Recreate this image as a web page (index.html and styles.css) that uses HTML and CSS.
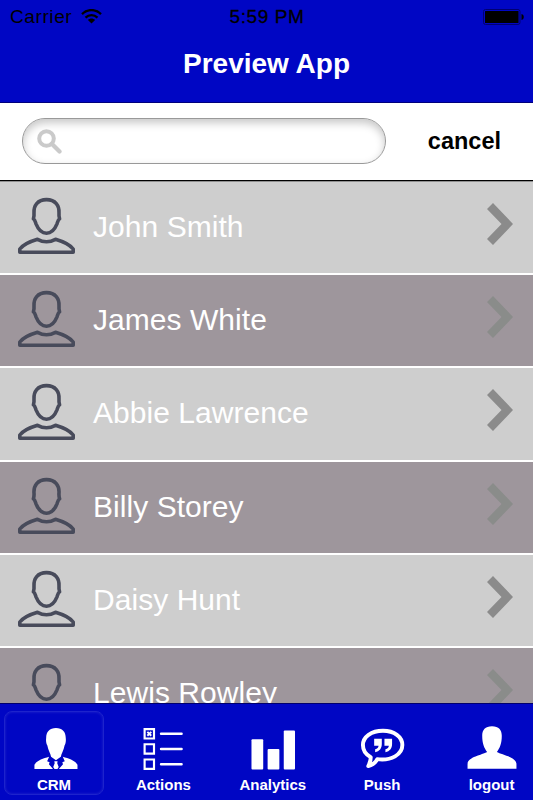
FILE: index.html
```html
<!DOCTYPE html>
<html lang="en">
<head>
<meta charset="UTF-8">
<meta name="viewport" content="width=device-width, initial-scale=1.0">
<title>Preview App</title>
<link rel="stylesheet" href="styles.css">
</head>
<body>

<!-- Shared icons -->
<svg class="sprite" width="0" height="0">
    <symbol id="person" viewBox="0 0 59 58">
        <g fill="none" stroke="#484b5b" stroke-width="3.6" stroke-linejoin="round">
            <path d="M29.5 2.6C20.5 2.6 16.5 8.8 17 16C17.2 18.5 17 20 16.4 21.8C18 22.8 18.2 24.5 19 26.8C21.5 33 25 36.2 29.5 36.2C34 36.2 37.5 33 40 26.8C40.8 24.5 41 22.8 42.6 21.8C42 20 41.8 18.5 42 16C42.5 8.8 38.5 2.6 29.5 2.6Z"/>
            <path d="M20.5 42.3C26 45.3 33 45.3 38.5 42.3C46 44.5 53 48 56.2 52V55.2H2.8V52C6 48 13 44.5 20.5 42.3Z"/>
        </g>
    </symbol>
    <symbol id="chevron" viewBox="0 0 26 42">
        <path d="M0 6L6 0L26 21L6 42L0 36L14.5 21Z" fill="currentColor"/>
    </symbol>
</svg>

<div class="app">
    <header class="header">
        <div class="status-bar">
            <div class="carrier">
                <span>Carrier</span>
                <svg class="wifi" width="21" height="15" viewBox="0 0 21 15">
                    <path d="M1 5.1C6.5-.3 14.5-.3 20 5.1M4.5 8.6C8 5.2 13 5.2 16.5 8.6" fill="none" stroke="#000" stroke-width="2.3"/>
                    <path d="M6.9 11.1C9 9.1 12 9.1 14.1 11.1L10.5 14.4Z"/>
                </svg>
            </div>
            <span class="clock">5:59 PM</span>
            <svg class="battery" width="41" height="16" viewBox="0 0 41 16">
                <rect x=".5" y=".5" width="36.5" height="15" rx="2" fill="none" stroke="#000070"/>
                <rect x="2" y="2" width="33.5" height="12" rx=".5"/>
                <path d="M38.5 5C41.5 5.5 41.5 10.5 38.5 11Z"/>
            </svg>
        </div>
        <h1>Preview App</h1>
    </header>

    <div class="search-bar">
        <label class="search-field">
            <svg width="25" height="25" viewBox="0 0 25 25">
                <g fill="none" stroke="#cacaca">
                    <circle cx="9.5" cy="9.5" r="7.3" stroke-width="4"/>
                    <path d="M15 15L22.5 22.5" stroke-width="4.3" stroke-linecap="round"/>
                </g>
            </svg>
            <input type="text" aria-label="Search">
        </label>
        <button class="cancel-button">cancel</button>
    </div>

    <ul class="contact-list">
        <li>
            <svg class="avatar"><use href="#person"/></svg>
            <span>John Smith</span>
            <svg class="chevron"><use href="#chevron"/></svg>
        </li>
        <li>
            <svg class="avatar"><use href="#person"/></svg>
            <span>James White</span>
            <svg class="chevron"><use href="#chevron"/></svg>
        </li>
        <li>
            <svg class="avatar"><use href="#person"/></svg>
            <span>Abbie Lawrence</span>
            <svg class="chevron"><use href="#chevron"/></svg>
        </li>
        <li>
            <svg class="avatar"><use href="#person"/></svg>
            <span>Billy Storey</span>
            <svg class="chevron"><use href="#chevron"/></svg>
        </li>
        <li>
            <svg class="avatar"><use href="#person"/></svg>
            <span>Daisy Hunt</span>
            <svg class="chevron"><use href="#chevron"/></svg>
        </li>
        <li>
            <svg class="avatar"><use href="#person"/></svg>
            <span>Lewis Rowley</span>
            <svg class="chevron"><use href="#chevron"/></svg>
        </li>
    </ul>

    <nav class="tab-bar">
        <a class="tab active">
            <svg width="50" height="46" viewBox="-2 0 50 46">
                <g fill="#fff">
                    <path d="M25 2C18.5 2 15 6 15 12C14.6 15 15 18 16.2 20C17 25 19.5 28 20 31.5L25 35L30 31.5C30.5 28 33 25 33.8 20C35 18 35.4 15 35 12C35 6 31.5 2 25 2Z"/>
                    <path d="M18 31.5L16 36L18.5 37L17.8 39L22 44H3V39.5C6 35 11.5 33.5 18 31.5ZM32 31.5L34 36L31.5 37L32.2 39L28 44H47V39.5C44 35 38.5 33.5 32 31.5Z"/>
                    <path d="M23.3 36H26.7L26.3 38L27.8 42L26.5 44H23.5L22.2 42L23.7 38Z"/>
                </g>
            </svg>
            <span>CRM</span>
        </a>
        <a class="tab">
            <svg width="50" height="46" viewBox="0 0 50 46">
                <g fill="none" stroke="#fff">
                    <path d="M6.2 3.2H15.8V12.8H6.2ZM6.2 18.7H15.8V28.3H6.2ZM6.2 34.2H15.8V43.8H6.2Z" stroke-width="2.2"/>
                    <path d="M9 6L13 10M13 6L9 10" stroke-width="2"/>
                    <path d="M23 8H44M23 23.5H44M23 39H44" stroke-width="2.5" stroke-linecap="round"/>
                </g>
            </svg>
            <span>Actions</span>
        </a>
        <a class="tab">
            <svg width="50" height="46" viewBox="0 0 50 46">
                <g fill="#fff">
                    <rect x="3" y="13.5" width="12" height="31" rx="1"/>
                    <rect x="19.5" y="23.5" width="12" height="21" rx="1"/>
                    <rect x="36" y="4.5" width="11.5" height="40" rx="1"/>
                </g>
            </svg>
            <span>Analytics</span>
        </a>
        <a class="tab">
            <svg width="50" height="46" viewBox="0 0 50 46">
                <path d="M26 4.9C14 4.9 5.5 11.2 5.5 19.5C5.5 25.2 8.8 29.5 13.5 31.9C13.5 35.2 12.5 38 11 41C15 40 18.5 37.2 20.2 33.9C34.5 35.7 45.8 29.2 45.8 19.5C45.8 11.2 37.5 4.9 26 4.9Z" fill="none" stroke="#fff" stroke-width="4" stroke-linejoin="round"/>
                <path d="M17 13H24.8V18.5C24.8 23 22.5 26 18 26.8V23.8C20.3 23.3 21.3 22 21.5 20.3H17ZM27.5 13H35.3V18.5C35.3 23 33 26 28.5 26.8V23.8C30.8 23.3 31.8 22 32 20.3H27.5Z" fill="#fff"/>
            </svg>
            <span>Push</span>
        </a>
        <a class="tab">
            <svg width="50" height="46" viewBox="0 0 50 46">
                <path d="M25 .3C18 .3 15 4 15 10C15 18 17 22.5 20 26.5C15 29.5 0 31.5 0 39V43.8H50V39C50 31.5 35 29.5 30 26.5C33 22.5 35 18 35 10C35 4 32 .3 25 .3Z" fill="#fff"/>
            </svg>
            <span>logout</span>
        </a>
    </nav>
</div>

</body>
</html>
```

FILE: styles.css
```css
* {
    box-sizing: border-box;
}

body {
    margin: 0;
    font-family: "Liberation Sans", Arial, sans-serif;
}

.sprite {
    display: block;
}

.app {
    display: flex;
    flex-direction: column;
    width: 533px;
    height: 800px;
    overflow: hidden;
    background: #fff;
}

.header {
    flex: none;
    height: 103px;
    background: #0006c4;
    border-bottom: 1px solid #00007c;
}

.status-bar {
    display: grid;
    grid-template-columns: 1fr auto 1fr;
    align-items: center;
    height: 34px;
    padding: 0 9px 0 10px;
    font-size: 19px;
    letter-spacing: 0.6px;
}

.carrier {
    display: flex;
    align-items: center;
    gap: 9px;
}

.wifi {
    margin-top: -2px;
}

.clock {
    -webkit-text-stroke: 0.3px #000;
}

.battery {
    justify-self: end;
}

h1 {
    margin: 13px 0 0;
    font-size: 28px;
    line-height: 34px;
    text-align: center;
    color: #fff;
}

.search-bar {
    flex: none;
    display: flex;
    align-items: center;
    justify-content: space-between;
    height: 78px;
    padding: 0 32px 1px 22px;
    border-bottom: 1px solid #000;
}

.search-field {
    display: flex;
    align-items: center;
    width: 364px;
    height: 46px;
    padding: 0 14px;
    border: 1px solid #999;
    border-radius: 23px;
    background: #fff;
    box-shadow: inset 0 4px 9px rgba(0, 0, 0, 0.22);
}

.search-field input {
    flex: 1;
    margin-left: 10px;
    border: none;
    outline: none;
    background: none;
    font-size: 20px;
}

.cancel-button {
    padding: 1px 0 0;
    border: none;
    background: none;
    font-family: inherit;
    font-size: 23.5px;
    font-weight: bold;
    color: #000;
}

.contact-list {
    flex: 1;
    min-height: 0;
    margin: 0;
    padding: 0;
    overflow: hidden;
    list-style: none;
}

.contact-list li {
    display: flex;
    align-items: center;
    height: 93.3px;
    padding: 0 20px 0 17px;
    border-bottom: 2px solid #fff;
    background: #cecece;
    color: #8b8b8b;
}

.contact-list li:first-child {
    height: 94px;
    border-top: 1px solid #909090;
}

.contact-list li:nth-child(even) {
    background: #9e969c;
    color: #8a8c8a;
}

.contact-list span {
    flex: 1;
    margin: -1px 0 0 17px;
    font-size: 30px;
    letter-spacing: 0.05px;
    color: #fff;
}

.avatar {
    width: 59px;
    height: 58px;
    margin-top: -3px;
}

.chevron {
    width: 26px;
    height: 42px;
    margin-top: -7px;
}

/* Five fixed-width tabs, the last one runs past the screen edge */
.tab-bar {
    flex: none;
    display: flex;
    gap: 9.4px;
    height: 97px;
    padding: 7px 0 0 4px;
    border-top: 1px solid #00006c;
    background: #0006c4;
    overflow: hidden;
}

.tab {
    flex: none;
    display: flex;
    flex-direction: column;
    align-items: center;
    width: 100px;
    height: 84px;
    padding-top: 14px;
    border: 1px solid transparent;
    border-radius: 8px;
    font-size: 15px;
    font-weight: bold;
    line-height: 18px;
    color: #fff;
}

.tab.active {
    border-color: #1d23cc;
    box-shadow: inset 0 0 3px rgba(255, 255, 255, 0.15);
}

.tab span {
    margin-top: 5px;
}
```
